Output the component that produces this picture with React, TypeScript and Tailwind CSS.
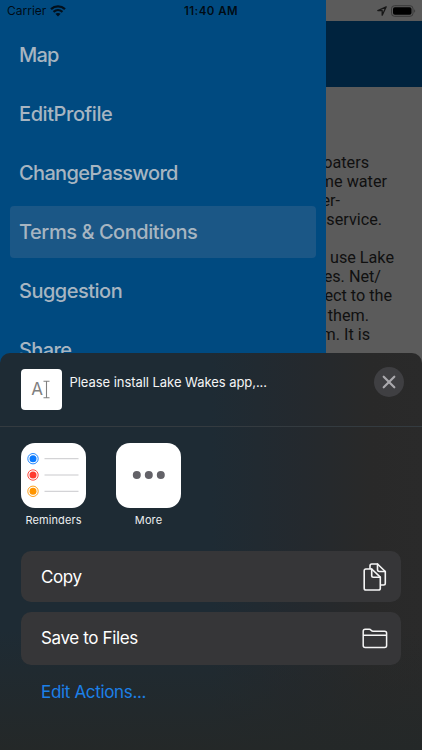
import React from "react";

const menuTop = [
  { label: "Map", cls: "tracking-[-0.75px]" },
  { label: "EditProfile", cls: "tracking-[-0.42px]" },
  { label: "ChangePassword", cls: "tracking-[-0.65px]" },
  { label: "Terms & Conditions", cls: "tracking-[-0.45px]", selected: true },
  { label: "Suggestion", cls: "tracking-[-0.5px]" },
  { label: "Share", cls: "tracking-[-0.6px]" },
];

const termsLines = [
  { text: "oaters", width: "w-[43px]" },
  { text: "me water", width: "w-[61px]" },
  { text: "er-", width: "w-[14px]" },
  { text: "service.", width: "w-[56px]" },
  { text: "", width: "w-[56px]" },
  { text: "use Lake", width: "w-[68px]" },
  { text: "es. Net/", width: "w-[55px]" },
  { text: "ect to the", width: "w-[66px]" },
  { text: "them.", width: "w-[43px]" },
  { text: "m. It is", width: "w-[44px]" },
];

function Wifi() {
  return (
    <svg width="16" height="12" viewBox="0 0 16 12" fill="none" stroke="#02101c">
      <path d="M1 4.2C5 .5 11 .5 15 4.2" strokeWidth="2.3" />
      <path d="M3.5 6.9c2.7-2.3 6.3-2.3 9 0" strokeWidth="2.1" />
      <path d="M8 11.4 5.4 8.8c1.5-1.2 3.7-1.2 5.2 0z" fill="#02101c" stroke="none" />
    </svg>
  );
}

function StatusBar() {
  return (
    <div className="absolute inset-x-0 top-0 flex h-[22px] items-center text-black/85">
      <div className="flex w-[140px] items-center gap-[4px] pl-[7px]">
        <span className="w-[39px] text-[12px] tracking-[0px] whitespace-nowrap">Carrier</span>
        <Wifi />
      </div>
      <div className="flex-1 pt-[2px] text-center text-[11.5px] font-semibold tracking-[0.45px]">11:40 AM</div>
      <div className="flex w-[140px] items-center justify-end gap-1 pr-[6px]">
        <svg width="10" height="10" viewBox="0 0 10 10" fill="none" stroke="#171717" strokeWidth="1.3" strokeLinejoin="round">
          <path d="M9.2 .8 .8 4.600h4.400V9.200z" />
        </svg>
        <svg width="25" height="12" viewBox="0 0 25 12">
          <rect x=".5" y=".7" width="21.5" height="10.6" rx="3" fill="none" stroke="#393939" />
          <rect x="2" y="2.2" width="18.5" height="7.6" rx="1.8" fill="#000" />
          <path d="M23.2 4.2c1.3.6 1.3 3 0 3.6z" fill="#393939" />
        </svg>
      </div>
    </div>
  );
}

function Drawer() {
  return (
    <nav className="flex w-[326px] shrink-0 flex-col gap-[7px] bg-[#004a80] px-[10px] pt-[29px]">
      {menuTop.map((item) => (
        <div
          key={item.label}
          className={`flex h-[52px] shrink-0 items-center rounded-[4px] pl-[9px] text-[20px] font-medium text-[#a7b5c1] ${item.selected ? "bg-[#1b5786]" : ""}`}
        >
          <span className={`whitespace-nowrap ${item.cls}`}>{item.label}</span>
        </div>
      ))}
    </nav>
  );
}

function TermsPage() {
  return (
    <main className="flex flex-1 flex-col overflow-hidden bg-[#5b5b5b]">
      <div className="h-[21px] shrink-0" />
      <div className="h-[66px] shrink-0 bg-[#00233e]" />
      <div className="pt-[65.500px] font-[Roboto,sans-serif] text-[16.2px] leading-[19.13px] text-[#101010]">
        {termsLines.map((line, i) => (
          <div key={i} className={`flex h-[19.13px] justify-end whitespace-nowrap ${line.width}`}>
            <span>{line.text}</span>
          </div>
        ))}
      </div>
    </main>
  );
}

function RemindersIcon() {
  return (
    <svg width="65" height="65" viewBox="0 0 65 65">
      {["#0a7aff", "#ff3b30", "#ff9500"].map((color, i) => (
        <g key={color} transform={`translate(0 ${15.7 + i * 16.3})`}>
          <circle cx="12" r="5.2" fill="none" stroke={color} strokeWidth=".9" />
          <circle cx="12" r="3.5" fill={color} />
          <path d="M23.5 0h34" stroke="#c9c9cc" />
        </g>
      ))}
    </svg>
  );
}

function MoreIcon() {
  return (
    <svg width="65" height="65" viewBox="0 0 65 65" fill="#636268">
      <circle cx="20.8" cy="32" r="4" />
      <circle cx="32.8" cy="32" r="4" />
      <circle cx="44.8" cy="32" r="4" />
    </svg>
  );
}

function ShareSheet() {
  return (
    <section className="absolute inset-x-0 top-[353px] bottom-0 overflow-hidden rounded-t-[10px] bg-[linear-gradient(90deg,#1e2b34_0%,#1e2b34_50%,#24292e_72%,#292929_88%,#2a2a2a_100%)]">
      <div className="flex h-full flex-col bg-linear-to-b from-transparent from-70% to-[#242828]">
        <header className="flex h-[74px] shrink-0 items-start border-b border-[#343b40] pr-[18px] pl-[21px]">
          <div className="mt-[16px] h-[41px] w-[41px] rounded-[4px] bg-white">
            <div className="flex h-full items-center justify-center pr-[2px] text-[#808080]">
              <span className="text-[17px] leading-none">A</span>
              <svg width="7" height="19" viewBox="0 0 7 19" fill="none" stroke="currentColor" strokeWidth="1.1">
                <path d="M.5 1.2h6M3.5 1.2v16.6M.5 17.8h6" />
              </svg>
            </div>
          </div>
          <div className="mt-[20px] ml-[7.5px] flex-1 text-[13px] leading-[18px] tracking-[-0.05px] text-[#f4f5f6]">
            Please install Lake Wakes app,...
          </div>
          <button aria-label="Close" className="mt-[14px] flex h-[30px] w-[30px] items-center justify-center rounded-full bg-[#3f3f42]">
            <svg width="14" height="14" viewBox="0 0 14 14" stroke="#aaa9ad" strokeWidth="2.2" strokeLinecap="round">
              <path d="m1.700 1.700 10.600 10.600M12.300 1.700 1.700 12.300" />
            </svg>
          </button>
        </header>
        <div className="flex h-[124px] shrink-0 gap-[30px] pt-[16px] pl-[21px]">
          {[
            { name: "Reminders", icon: <RemindersIcon /> },
            { name: "More", icon: <MoreIcon /> },
          ].map((app) => (
            <div key={app.name} className="flex w-[65px] flex-col items-center">
              <div className="h-[65px] w-[65px] rounded-[14px] bg-white">{app.icon}</div>
              <span className="mt-[4px] text-[11px] leading-[16px] tracking-[0.1px] text-[#eceeef]">{app.name}</span>
            </div>
          ))}
        </div>
        <div className="flex flex-col gap-[10px] px-[21px] text-[17px] text-white">
          <div className="flex h-[51px] items-center justify-between rounded-[10px] bg-[#363638] pr-[14.500px] pl-[20px]">
            <span className="pt-[2px] tracking-[-0.4px]">Copy</span>
            <svg width="24" height="28" viewBox="0 0 24 28" fill="none" stroke="#f5f5f5" strokeWidth="1.6" strokeLinejoin="round" strokeLinecap="round">
              <path d="M7 6V2.7Q7 1 8.700 1H14.500L22.300 8.500V20.300Q22.300 22 20.600 22H17.500" />
              <path d="M14.500 1V6.500Q14.500 8.500 16.500 8.500H22.300" />
              <path d="M2.900 6H8.700L17.300 14.200V25.200Q17.300 27 15.500 27H2.900Q1.200 27 1.200 25.200V7.700Q1.200 6 2.900 6Z" fill="#363638" />
              <path d="M8.700 6V12.500Q8.700 14.200 10.400 14.200H17.300" />
            </svg>
          </div>
          <div className="flex h-[53px] items-center justify-between rounded-[10px] bg-[#363638] pr-[13.5px] pl-[20px]">
            <span className="tracking-[-0.36px]">Save to Files</span>
            <svg width="26" height="21" viewBox="0 0 26 21" fill="none" stroke="#f5f5f5" strokeWidth="1.5" strokeLinejoin="round">
              <path d="M1.200 17.500V3.200Q1.200 1.200 3.200 1.200H7.300C9.200 1.200 9 3.200 11 3.200H22.600Q24.600 3.200 24.600 5.200V17.500Q24.600 19.500 22.600 19.500H3.200Q1.200 19.500 1.200 17.500ZM1.200 7.200H24.600" />
            </svg>
          </div>
        </div>
        <button className="mt-[15px] ml-[41px] text-left text-[17px] leading-[24px] tracking-[-0.33px] text-[#1c80e8]">Edit Actions...</button>
      </div>
    </section>
  );
}

export default function App() {
  return (
    <div className="relative flex h-[750px] w-[422px] overflow-hidden bg-[#5b5b5b] font-[Inter,sans-serif]">
      <Drawer />
      <TermsPage />
      <StatusBar />
      <ShareSheet />
    </div>
  );
}
